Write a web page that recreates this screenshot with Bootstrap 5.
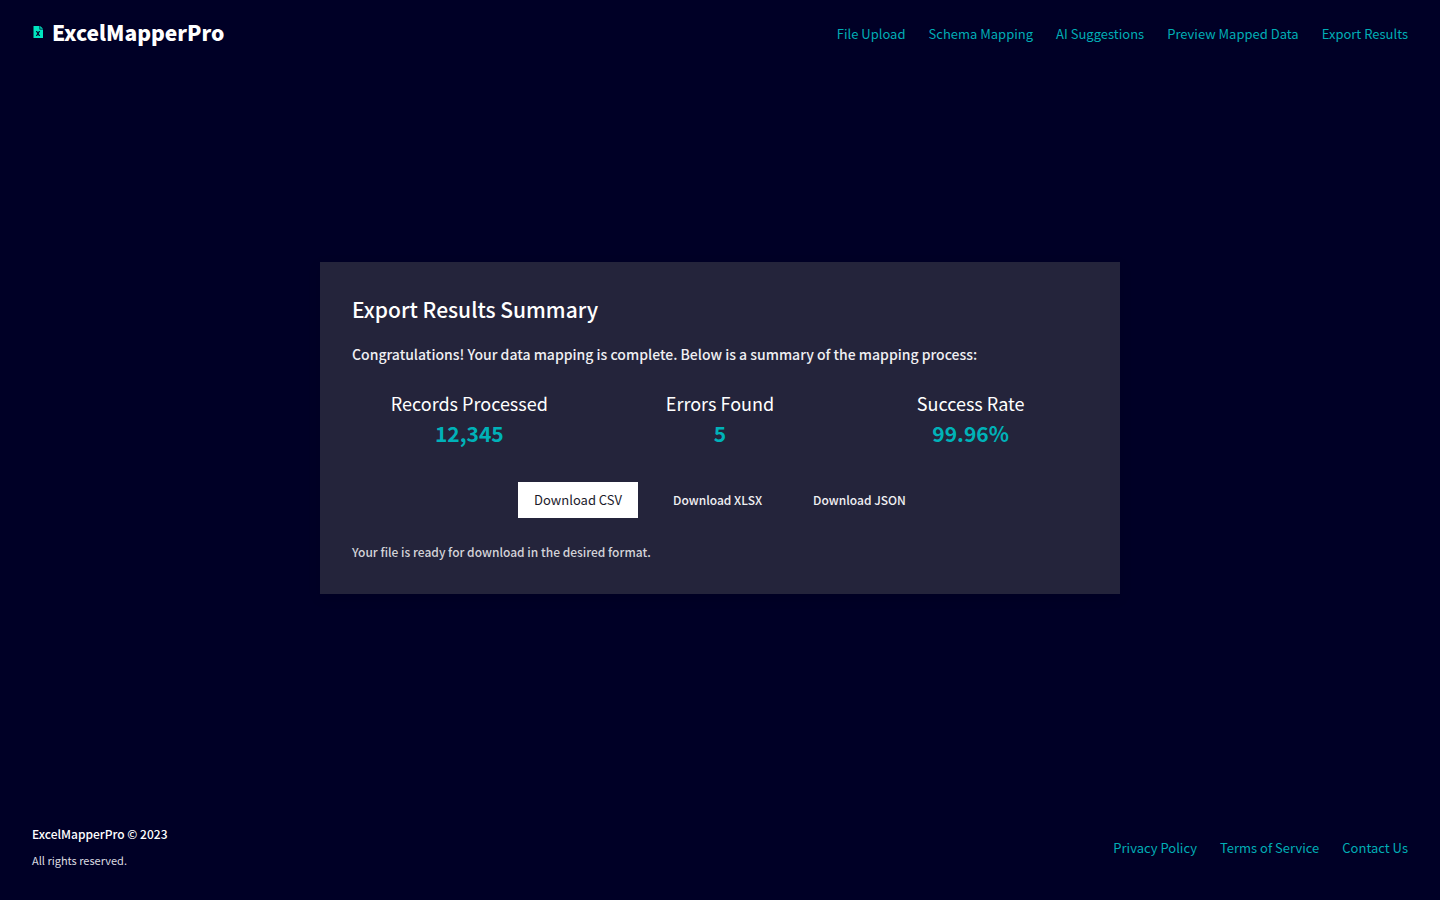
<!DOCTYPE html>
<html lang="en">
<head>
<meta charset="utf-8">
<meta name="viewport" content="width=device-width, initial-scale=1">
<title>ExcelMapperPro</title>
<link href="https://cdn.jsdelivr.net/npm/bootstrap@5.3.0/dist/css/bootstrap.min.css" rel="stylesheet">
<style>
body{background:#000026;color:#fff;font-family:"Noto Sans CJK SC",sans-serif;font-size:14px;line-height:24px}
.site-head{padding:16px 32px}
.site-foot{padding:32px}
.brand{font-size:21px;line-height:32px;font-weight:900;color:#fff;text-decoration:none}
.site-link{font-size:13px;line-height:20px;color:#00adb5;text-decoration:none}
.links{gap:23px;padding-top:4px}
.panel{max-width:800px;padding:32px;background:#24243b;box-shadow:0 4px 12px rgba(0,0,0,.1)}
.panel h1{font-size:21px;line-height:30px;font-weight:500;margin-bottom:18px}
.intro{font-weight:500;margin-bottom:23px;color:#f0f0f3}
.stat h2{font-size:18px;line-height:28px;font-weight:400;margin:0}
.stat p{font-size:21px;line-height:32px;font-weight:700;color:#00b2b8;margin:0}
.downloads{gap:19px;margin:33px 0 24px}
.dl{font-size:12px;line-height:20px;padding:8px 16px;border:0;border-radius:0;font-weight:500;color:#f0f0f3}
.dl-main{background:#fff;color:#1b1b2b;font-size:13px;font-weight:400}
.note{font-size:12px;line-height:20px;font-weight:500;color:#d3d3d8}
.copy{font-size:12px;line-height:20px;font-weight:500}
.rights{font-size:11px;line-height:16px;color:#dcdce1}
</style>
</head>
<body class="d-flex flex-column min-vh-100">
<header class="site-head d-flex justify-content-between align-items-center">
<a href="#" class="brand d-flex align-items-center gap-2"><svg width="12" height="12" viewBox="0 0 12 12" fill="#00e5c0" aria-hidden="true"><path fill-rule="evenodd" d="M1.500 0H7.500V3.500H11V12H1.500ZM8.200 0L11 2.800H8.200ZM3.800 5L5.300 7.500L3.800 10H5.100L6 8.500L6.900 10H8.200L6.700 7.500L8.200 5H6.900L6 6.500L5.100 5Z"/></svg>ExcelMapperPro</a>
<nav class="links d-flex flex-wrap" aria-label="Main"><a class="site-link" href="#">File Upload</a><a class="site-link" href="#">Schema Mapping</a><a class="site-link" href="#">AI Suggestions</a><a class="site-link" href="#">Preview Mapped Data</a><a class="site-link" href="#">Export Results</a></nav>
</header>
<main class="flex-grow-1 d-flex align-items-center justify-content-center">
<section class="panel w-100">
<h1>Export Results Summary</h1>
<p class="intro">Congratulations! Your data mapping is complete. Below is a summary of the mapping process:</p>
<div class="row gx-3 text-center">
<div class="col-4 stat"><h2>Records Processed</h2><p>12,345</p></div>
<div class="col-4 stat"><h2>Errors Found</h2><p>5</p></div>
<div class="col-4 stat"><h2>Success Rate</h2><p>99.96%</p></div>
</div>
<div class="downloads d-flex flex-wrap justify-content-center"><button type="button" class="btn dl dl-main">Download CSV</button><button type="button" class="btn dl">Download XLSX</button><button type="button" class="btn dl">Download JSON</button></div>
<p class="note mb-0">Your file is ready for download in the desired format.</p>
</section>
</main>
<footer class="site-foot d-flex justify-content-between align-items-center">
<div><p class="copy mb-2">ExcelMapperPro © 2023</p><p class="rights mb-0">All rights reserved.</p></div>
<nav class="links d-flex flex-wrap" aria-label="Legal"><a class="site-link" href="#">Privacy Policy</a><a class="site-link" href="#">Terms of Service</a><a class="site-link" href="#">Contact Us</a></nav>
</footer>
<script src="https://cdn.jsdelivr.net/npm/bootstrap@5.3.0/dist/js/bootstrap.bundle.min.js"></script>
</body>
</html>
